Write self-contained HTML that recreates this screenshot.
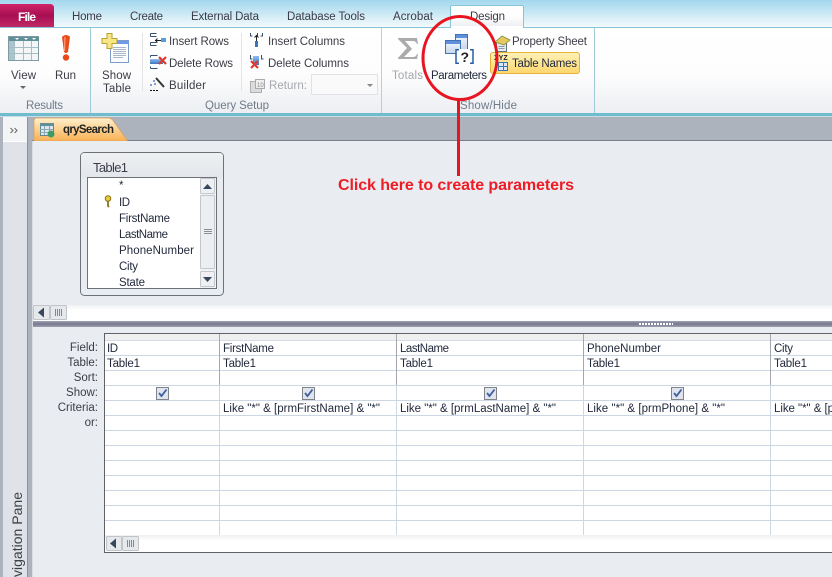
<!DOCTYPE html>
<html><head><meta charset="utf-8"><style>
html,body{margin:0;padding:0;background:#e9edf1;width:832px;height:577px;overflow:hidden}
svg{display:block}
text{font-family:"Liberation Sans",sans-serif;font-size:11.500px;fill:#3c3c46}
.g{fill:#6f7c8a}.d{fill:#a5a8ad}.k{fill:#222a3c}
</style></head><body>
<svg width="832" height="577" viewBox="0 0 832 577" xmlns="http://www.w3.org/2000/svg">
<defs>
<linearGradient id="top" x1="0" y1="0" x2="0" y2="1"><stop offset="0" stop-color="#a3d7ee"/><stop offset="1" stop-color="#f6fbfc"/></linearGradient>
<linearGradient id="rib" x1="0" y1="0" x2="0" y2="1"><stop offset="0" stop-color="#fff"/><stop offset=".55" stop-color="#fdfdfd"/><stop offset="1" stop-color="#eceef2"/></linearGradient>
<linearGradient id="file" x1="0" y1="0" x2="0" y2="1"><stop offset="0" stop-color="#cf2468"/><stop offset=".5" stop-color="#a80e52"/><stop offset="1" stop-color="#bf2a68"/></linearGradient>
<linearGradient id="tab" x1="0" y1="0" x2="0" y2="1"><stop offset="0" stop-color="#fff0cc"/><stop offset="1" stop-color="#f9b054"/></linearGradient>
<linearGradient id="yel" x1="0" y1="0" x2="0" y2="1"><stop offset="0" stop-color="#fff2b8"/><stop offset="1" stop-color="#fdd66c"/></linearGradient>
<linearGradient id="sp" x1="0" y1="0" x2="0" y2="1"><stop offset="0" stop-color="#a0a0b4"/><stop offset=".5" stop-color="#77778f"/><stop offset="1" stop-color="#a0a0b2"/></linearGradient>
<linearGradient id="bar" x1="0" y1="0" x2="0" y2="1"><stop offset="0" stop-color="#eef0f2"/><stop offset=".3" stop-color="#fff"/><stop offset="1" stop-color="#fff"/></linearGradient>
<linearGradient id="hd" x1="0" y1="0" x2="0" y2="1"><stop offset="0" stop-color="#eef0f2"/><stop offset="1" stop-color="#e3e6ea"/></linearGradient>
<linearGradient id="blue" x1="0" y1="0" x2="0" y2="1"><stop offset="0" stop-color="#8fbcf0"/><stop offset="1" stop-color="#3d74bd"/></linearGradient>
<linearGradient id="win" x1="0" y1="0" x2="0" y2="1"><stop offset="0" stop-color="#f4f8fd"/><stop offset="1" stop-color="#c5d6ea"/></linearGradient>
</defs>

<rect width="832" height="28" fill="url(#top)"/>
<rect y="27" width="832" height="1" fill="#84c6d8"/>
<rect y="28" width="832" height="85" fill="url(#rib)"/>
<rect y="113" width="832" height="3" fill="#6fbccf"/>
<rect y="116" width="832" height="1" fill="#c5dfe4"/>
<rect y="117" width="832" height="23" fill="#adb3bd"/>
<rect y="140" width="832" height="1" fill="#75808a"/>

<path d="M0 4H50Q54 4 54 8V27H0Z" fill="url(#file)"/>
<text x="18" y="21" textLength="18" style="fill:#fff;font-weight:bold;font-size:12px">File</text>
<path d="M450.500 27V7Q450.500 5.500 452 5.500H522Q523.500 5.500 523.500 7V27" fill="url(#rib)" stroke="#84c6d8"/>
<rect x="451" y="26" width="72" height="3" fill="#fff"/>
<text x="72" y="20" textLength="30">Home</text>
<text x="130" y="20" textLength="33">Create</text>
<text x="191" y="20" textLength="68">External Data</text>
<text x="287" y="20" textLength="78">Database Tools</text>
<text x="393" y="20" textLength="40">Acrobat</text>
<text x="470" y="20" textLength="35">Design</text>

<g><rect x="90" y="28" width="1" height="85" fill="#9fcbd8"/><rect x="381" y="28" width="1" height="85" fill="#b8cfd8"/><rect x="594" y="28" width="1" height="85" fill="#9fcbd8"/><rect x="142" y="33" width="1" height="58" fill="#e2e4e8"/><rect x="241" y="33" width="1" height="58" fill="#e2e4e8"/></g>

<!-- View icon -->
<rect x="8.500" y="36.500" width="30" height="24" fill="#f2f6f7" stroke="#7f9aa3"/>
<rect x="9" y="37" width="30" height="4" fill="#5f8f98"/>
<rect x="9" y="41" width="5" height="19" fill="#a9c6cc"/>
<g stroke="#a9bcc3"><path d="M9 47.500H38M9 53.500H38M14.500 41V60M23.500 41V60M31.500 41V60"/></g>
<path d="M15 38h4l-2 2zM24 38h4l-2 2zM32 38h4l-2 2z" fill="#fff"/>
<text x="11" y="79" textLength="25">View</text>
<path d="M20 86h6l-3 3z" fill="#666"/>
<!-- Run icon -->
<path d="M62 37Q66 33 70 37L68 52Q66 54 64 52Z" fill="#ea4a1c"/>
<path d="M65 37l-.5 14" stroke="#f9a37c" stroke-width="1.200"/>
<circle cx="66" cy="57.500" r="3.200" fill="#e8481c"/>
<text x="55" y="79" textLength="21">Run</text>
<text class="g" x="26" y="109" textLength="37">Results</text>

<!-- Show Table -->
<rect x="110.500" y="40.500" width="18" height="22" fill="#fdfeff" stroke="#7f9cc8"/>
<rect x="111" y="41" width="18" height="3" fill="#6f9ae8"/>
<path d="M113 47.500h13M113 49.500h13M113 51.500h13M113 53.500h13M113 55.500h13M113 57.500h10" stroke="#aab6c6"/>
<path d="M107 33.500h5v5h5v5h-5v5h-5v-5h-5v-5h5z" fill="#f8e684" stroke="#b9a033"/>
<text x="102" y="79" textLength="29">Show</text>
<text x="103" y="92" textLength="28">Table</text>

<!-- Insert Rows -->
<path d="M150.500 33.500h6M150.500 33.500v3M150.500 36.500h6M150.500 45.500h6M150.500 42.500h6M150.500 42.500v3" stroke="#34506e" fill="none"/>
<rect x="161" y="38" width="5" height="4" fill="#5b9bd8"/><path d="M155 40.500h6M157.500 38.500l-2 2 2 2" stroke="#222" fill="none"/>
<text x="169" y="45" textLength="60">Insert Rows</text>
<!-- Delete Rows -->
<rect x="150" y="59" width="13" height="5" fill="url(#blue)"/>
<path d="M150.500 55.500h7M150.500 68.500h7M150.500 55.500v2M150.500 66.500v2" stroke="#34506e" fill="none"/>
<path d="M159 57l7 7M166 57l-7 7" stroke="#e0392b" stroke-width="2.200"/>
<text x="169" y="67" textLength="64">Delete Rows</text>
<!-- Builder -->
<path d="M156 78l8 9" stroke="#333" stroke-width="2"/>
<path d="M153 81h2M150 85h2M154 84h2" stroke="#5a7fc0" stroke-width="1.500"/>
<path d="M150 90.500h2M153 90.500h2M156 90.500h2" stroke="#111"/>
<text x="169" y="89" textLength="37">Builder</text>

<!-- Insert Columns -->
<path d="M250.500 33v3h2M257.500 33v3h-2M262.500 33v3h-2" stroke="#34506e" fill="none"/>
<rect x="255" y="41" width="3" height="6" fill="#3a75bd"/><path d="M256.500 35v6M254.500 37.500l2-2 2 2" stroke="#222" fill="none"/>
<text x="268" y="45" textLength="77">Insert Columns</text>
<!-- Delete Columns -->
<rect x="253" y="56" width="6" height="9" fill="url(#blue)"/>
<path d="M250.500 55v4h2M261.500 55v4h2" stroke="#34506e" fill="none"/>
<path d="M251 61l7 7M258 61l-7 7" stroke="#e0392b" stroke-width="2.200"/>
<text x="268" y="67" textLength="81">Delete Columns</text>
<!-- Return -->
<rect x="250.500" y="81.500" width="11" height="11" fill="#dcdcdc" stroke="#b0b0b0"/><rect x="255.500" y="79.500" width="9" height="9" fill="#eee" stroke="#aaa"/>
<text x="257" y="87" style="font-size:6px;fill:#888">10</text>
<text class="d" x="269" y="89" textLength="38">Return:</text>
<rect x="311.500" y="74.500" width="66" height="20" fill="#fafafa" stroke="#dfe2e6"/>
<path d="M367 84h6l-3 3z" fill="#888"/>
<text class="g" x="205" y="109" textLength="64">Query Setup</text>

<!-- Totals -->
<path d="M398 38h19l1 6h-1q-1-3-4-3h-8l7 8-8 8h9q3 0 4-3h1l-1 5h-19v-1l9-10-9-9z" fill="#a9abad"/>
<text class="d" x="392" y="79" textLength="31">Totals</text>

<!-- Parameters icon -->
<rect x="455.500" y="34.500" width="12" height="15" fill="url(#win)" stroke="#3f73b6"/>
<rect x="456" y="35" width="11" height="3" fill="#5f90dc"/>
<rect x="445.500" y="40.500" width="15" height="13" fill="url(#win)" stroke="#3f73b6"/>
<rect x="446" y="41" width="14" height="3" fill="#5f90dc"/>
<rect x="456" y="49" width="17" height="15" fill="#fff"/>
<path d="M459 49.800h-3v13.400h3M470 49.800h3v13.400h-3" fill="none" stroke="#2a5fa5" stroke-width="1.500"/>
<text x="460.500" y="62" style="font-size:14px;font-weight:bold;fill:#222">?</text>
<text class="k" x="431" y="79" textLength="56">Parameters</text>

<!-- Property sheet -->
<rect x="496.500" y="41.500" width="10" height="10" fill="#e6ecf0" stroke="#60727f"/>
<path d="M495 42l7-6 8 4-6 5z" fill="#e7c860" stroke="#7f8f40" stroke-width=".8"/>
<path d="M498.500 46.500h6M498.500 48.500h6" stroke="#8a9aa6"/>
<text x="512" y="45" textLength="75">Property Sheet</text>
<!-- Table names -->
<rect x="490.500" y="52.500" width="89" height="21" rx="2.500" fill="url(#yel)" stroke="#e5b23c"/>
<text x="494" y="60" style="font-size:7px;font-weight:bold;fill:#222">XYZ</text>
<rect x="498.500" y="62.500" width="9" height="8" fill="#dfe8f2" stroke="#3f73b6"/><path d="M498 66.500h10M503.500 62v9" stroke="#3f73b6"/>
<text class="k" x="512" y="67" textLength="65">Table Names</text>
<text class="g" x="460" y="109" textLength="57">Show/Hide</text>

<!-- nav pane -->
<rect y="117" width="28" height="460" fill="#dfe3e9"/>
<rect y="117" width="3" height="460" fill="#adb3bd"/>
<rect x="27" y="117" width="1" height="460" fill="#8b929c"/>
<rect x="28" y="117" width="4" height="460" fill="#adb3bd"/>
<rect x="32" y="141" width="1" height="436" fill="#d9dde2"/>
<rect x="3" y="117" width="24" height="24" fill="#f2f4f6"/>
<rect x="3" y="141" width="24" height="1" fill="#fff"/>
<path d="M10.500 128l2.500 2.500-2.500 2.500M14.500 128l2.500 2.500-2.500 2.500" fill="none" stroke="#666"/>
<text transform="translate(22,577) rotate(-90)" x="0" y="0" style="font-size:14px;fill:#3c4048" textLength="85">vigation Pane</text>

<!-- document tab -->
<path d="M34 141V121Q34 118 37 118H108Q112 118 114 122L127 140V141Z" fill="url(#tab)" stroke="#dca15c" stroke-width=".8"/>
<rect x="40.500" y="123.500" width="13" height="12" fill="#dce6ec" stroke="#5f8792"/>
<rect x="40" y="123" width="14" height="3" fill="#5f8f98"/><path d="M40 129.500h13M40 132.500h13M44.500 126v9M49.500 126v9" stroke="#8aabb4"/>
<circle cx="51" cy="134" r="3.500" fill="#3f9a6a"/>
<text x="63" y="133" textLength="51" style="font-weight:bold;font-size:11.500px;fill:#222">qrySearch</text>

<!-- upper pane -->
<rect x="33" y="141" width="799" height="164" fill="#e9edf1"/>
<rect x="80.500" y="152.500" width="143" height="143" rx="4" fill="#e9edf1" stroke="#6c7278"/>
<rect x="81" y="153" width="142" height="25" rx="3" fill="url(#hd)"/>
<text x="93" y="172" textLength="35" style="font-size:13px;fill:#3c3c4a">Table1</text>
<rect x="87.500" y="177.500" width="129" height="111" fill="#fff" stroke="#6c7278"/>
<text x="119" y="189" class="k">*</text>
<text x="119" y="206" class="k" textLength="11">ID</text>
<text x="119" y="222" class="k" textLength="51">FirstName</text>
<text x="119" y="238" class="k" textLength="49">LastName</text>
<text x="119" y="254" class="k" textLength="75">PhoneNumber</text>
<text x="119" y="270" class="k" textLength="19">City</text>
<text x="119" y="286" class="k" textLength="26">State</text>
<circle cx="108" cy="198.500" r="2.800" fill="#e8c93a" stroke="#8a7420"/><path d="M108 201v5l1 1" stroke="#8a7420" stroke-width="1.800" fill="none"/>
<rect x="200" y="178" width="16" height="110" fill="#f1f2f4"/>
<rect x="200.500" y="178.500" width="14" height="15" rx="1" fill="#eef0f3" stroke="#c4c8cd"/>
<path d="M203 189l4.500-5 4.500 5z" fill="#36475e"/>
<rect x="200.500" y="195.500" width="14" height="73" rx="1" fill="#eceef1" stroke="#c4c8cd"/>
<path d="M204 229.500h8M204 231.500h8M204 233.500h8" stroke="#8a8f96"/>
<rect x="200.500" y="271.500" width="14" height="15" rx="1" fill="#eef0f3" stroke="#c4c8cd"/>
<path d="M203 277l4.500 5 4.500-5z" fill="#36475e"/>

<rect x="33" y="305" width="799" height="16" fill="url(#bar)"/>
<rect x="33.500" y="305.500" width="16" height="14" rx="1" fill="#e6e9ec" stroke="#c0c4c9"/>
<path d="M38 312.500l6-5v10z" fill="#36475e"/>
<rect x="50.500" y="305.500" width="16" height="14" rx="1" fill="#e6e9ec" stroke="#c0c4c9"/>
<path d="M55.500 309v7M57.500 309v7M59.500 309v7M61.500 309v7" stroke="#888"/>
<rect x="33" y="321" width="799" height="6" fill="url(#sp)"/>
<path d="M639 324h34" stroke="#fff" stroke-dasharray="2 1" stroke-width="2"/>

<rect x="33" y="327" width="799" height="250" fill="#e9edf1"/>
<text x="98" y="351" text-anchor="end">Field:</text>
<text x="98" y="366" text-anchor="end">Table:</text>
<text x="98" y="381" text-anchor="end">Sort:</text>
<text x="98" y="396" text-anchor="end">Show:</text>
<text x="98" y="411" text-anchor="end">Criteria:</text>
<text x="98" y="426" text-anchor="end">or:</text>

<rect x="104.500" y="333.500" width="728" height="219" fill="#fff" stroke="#5f6368"/>
<rect x="105" y="334" width="727" height="6" fill="#efefef"/>
<rect x="105" y="340" width="727" height="1" fill="#d4dbe6"/>
<g stroke="#cdd6e3">
<path d="M105 355.500H832M105 370.500H832M105 385.500H832M105 400.500H832M105 415.500H832M105 430.500H832M105 445.500H832M105 460.500H832M105 475.500H832M105 490.500H832M105 505.500H832M105 520.500H832"/>
<path d="M219.500 385V535M396.500 385V535M583.500 385V535M770.500 385V535"/>
</g>
<g stroke="#a3a8ae"><path d="M219.500 334V385M396.500 334V385M583.500 334V385M770.500 334V385"/></g>

<text class="k" x="107" y="352" textLength="11">ID</text>
<text class="k" x="223" y="352" textLength="51">FirstName</text>
<text class="k" x="400" y="352" textLength="49">LastName</text>
<text class="k" x="587" y="352" textLength="74">PhoneNumber</text>
<text class="k" x="774" y="352" textLength="19">City</text>
<text class="k" x="107" y="367" textLength="33">Table1</text>
<text class="k" x="223" y="367" textLength="33">Table1</text>
<text class="k" x="400" y="367" textLength="33">Table1</text>
<text class="k" x="587" y="367" textLength="33">Table1</text>
<text class="k" x="774" y="367" textLength="33">Table1</text>
<text class="k" x="223" y="412" textLength="157">Like "*" &amp; [prmFirstName] &amp; "*"</text>
<text class="k" x="400" y="412" textLength="156">Like "*" &amp; [prmLastName] &amp; "*"</text>
<text class="k" x="587" y="412" textLength="138">Like "*" &amp; [prmPhone] &amp; "*"</text>
<text class="k" x="774" y="412" textLength="60">Like "*" &amp; [p</text>

<g fill="#dfe4ee" stroke="#7f8489">
<rect x="156.500" y="387.500" width="12" height="12"/><rect x="302.500" y="387.500" width="12" height="12"/><rect x="484.500" y="387.500" width="12" height="12"/><rect x="671.500" y="387.500" width="12" height="12"/>
</g>
<g fill="none" stroke="#3f5f9e" stroke-width="1.800">
<path d="M159 393l2.500 3 5-6.500"/><path d="M305 393l2.500 3 5-6.500"/><path d="M487 393l2.500 3 5-6.500"/><path d="M674 393l2.500 3 5-6.500"/>
</g>

<rect x="105" y="535" width="727" height="17" fill="url(#bar)"/>
<rect x="106.500" y="536.500" width="15" height="14" rx="1" fill="#e6e9ec" stroke="#c0c4c9"/>
<path d="M110 543.500l6-5v10z" fill="#36475e"/>
<rect x="122.500" y="536.500" width="16" height="14" rx="1" fill="#e6e9ec" stroke="#c0c4c9"/>
<path d="M127.500 540v7M129.500 540v7M131.500 540v7M133.500 540v7" stroke="#888"/>

<ellipse cx="460" cy="58" rx="37" ry="41.500" fill="none" stroke="#e8141f" stroke-width="3"/>
<rect x="457" y="99" width="3" height="77" fill="#e8141f"/>
<text x="338" y="190" textLength="236" style="font-size:16px;font-weight:bold;fill:#ee1c25">Click here to create parameters</text>
</svg>
</body></html>
